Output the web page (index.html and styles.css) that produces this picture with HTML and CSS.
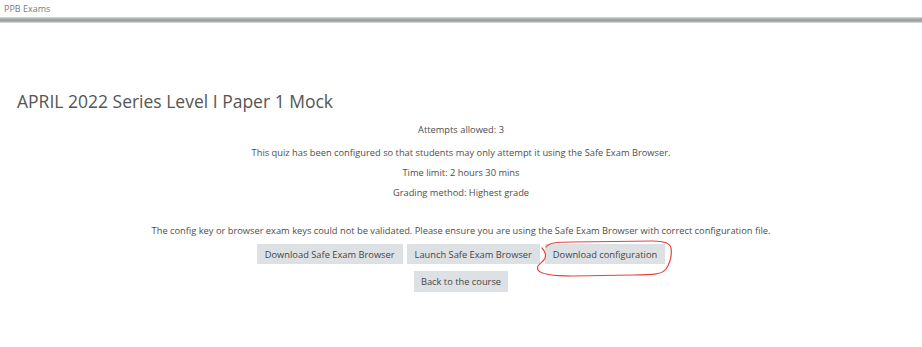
FILE: index.html
```html
<!DOCTYPE html>
<html lang="en">
<head>
  <meta charset="UTF-8">
  <meta name="viewport" content="width=device-width, initial-scale=1.0">
  <title>PPB Exams</title>
  <link rel="stylesheet" href="styles.css">
</head>
<body>
  <header class="site-header">
    <div class="site-name">PPB Exams</div>
    <div class="header-bar"></div>
  </header>

  <main class="quiz-page">
    <h1 class="quiz-title">APRIL 2022 Series Level I Paper 1 Mock</h1>

    <div class="quiz-info">
      <p class="info-line first">Attempts allowed: 3</p>
      <p class="info-line">This quiz has been configured so that students may only attempt it using the Safe Exam Browser.</p>
      <p class="info-line">Time limit: 2 hours 30 mins</p>
      <p class="info-line">Grading method: Highest grade</p>
    </div>

    <div class="seb-box">
      <p class="info-line">The config key or browser exam keys could not be validated. Please ensure you are using the Safe Exam Browser with correct configuration file.</p>
      <div class="button-row">
        <button class="quiz-button">Download Safe Exam Browser</button>
        <button class="quiz-button">Launch Safe Exam Browser</button>
        <span class="marked">
          <button class="quiz-button">Download configuration</button>
          <svg class="pen-loop" width="150" height="44" viewBox="0 0 150 44">
            <path d="M13 8 C16 4 22 3 40 3 L120 2 C130 2 137 4 138 9 C139 16 137 24 133 30 C129 35 122 36 100 36 L40 37 C22 37 8 36 5 31 C3 27 7 25 11 21 C14 17 12 12 9 9" />
          </svg>
        </span>
      </div>
      <div class="button-row back-row">
        <button class="quiz-button">Back to the course</button>
      </div>
    </div>
  </main>
</body>
</html>
```

FILE: styles.css
```css
body, html {
  margin: 0;
  padding: 0;
  background-color: #fff;
  font-family: 'Open Sans', 'Noto Sans', sans-serif;
  color: #4a4a4a;
}

.site-header {
  padding-top: 3px;
}

.site-name {
  font-size: 9px;
  line-height: 11px;
  color: #7a7a7a;
  padding-left: 4px;
}

.header-bar {
  margin-top: 3px;
  height: 6px;
  background-image: linear-gradient(to bottom, #dcdede 0%, #a3a6a7 35%, #9a9d9e 65%, #dfe1e1 100%);
}

.quiz-page {
  padding-top: 66px;
}

.quiz-title {
  margin: 0 0 0 17px;
  font-size: 17.5px;
  font-weight: 400;
  line-height: 24px;
  color: #555;
}

.quiz-info {
  margin-top: 11px;
  text-align: center;
}

.info-line {
  margin: 0 0 8px;
  font-size: 9.3px;
  line-height: 12px;
  color: #4d4d4d;
}

.info-line.first {
  margin-bottom: 11px;
}

.seb-box {
  margin-top: 26px;
  text-align: center;
}

.seb-box .info-line {
  margin-bottom: 7px;
}

.button-row {
  display: flex;
  justify-content: center;
  gap: 4px;
  margin-bottom: 7px;
}

.quiz-button {
  background-color: #dee1e4;
  border: none;
  border-radius: 0;
  padding: 0 8px;
  height: 20px;
  font-family: 'Open Sans', 'Noto Sans', sans-serif;
  font-size: 9.3px;
  color: #454545;
  cursor: pointer;
}

.back-row .quiz-button {
  height: 21px;
  padding: 0 7px;
}

.marked {
  position: relative;
  display: flex;
  margin-left: 1px;
}

.pen-loop {
  position: absolute;
  left: -12px;
  top: -5px;
  fill: none;
  stroke: #e8423f;
  stroke-width: 1.2;
  stroke-linecap: round;
  pointer-events: none;
}
```
